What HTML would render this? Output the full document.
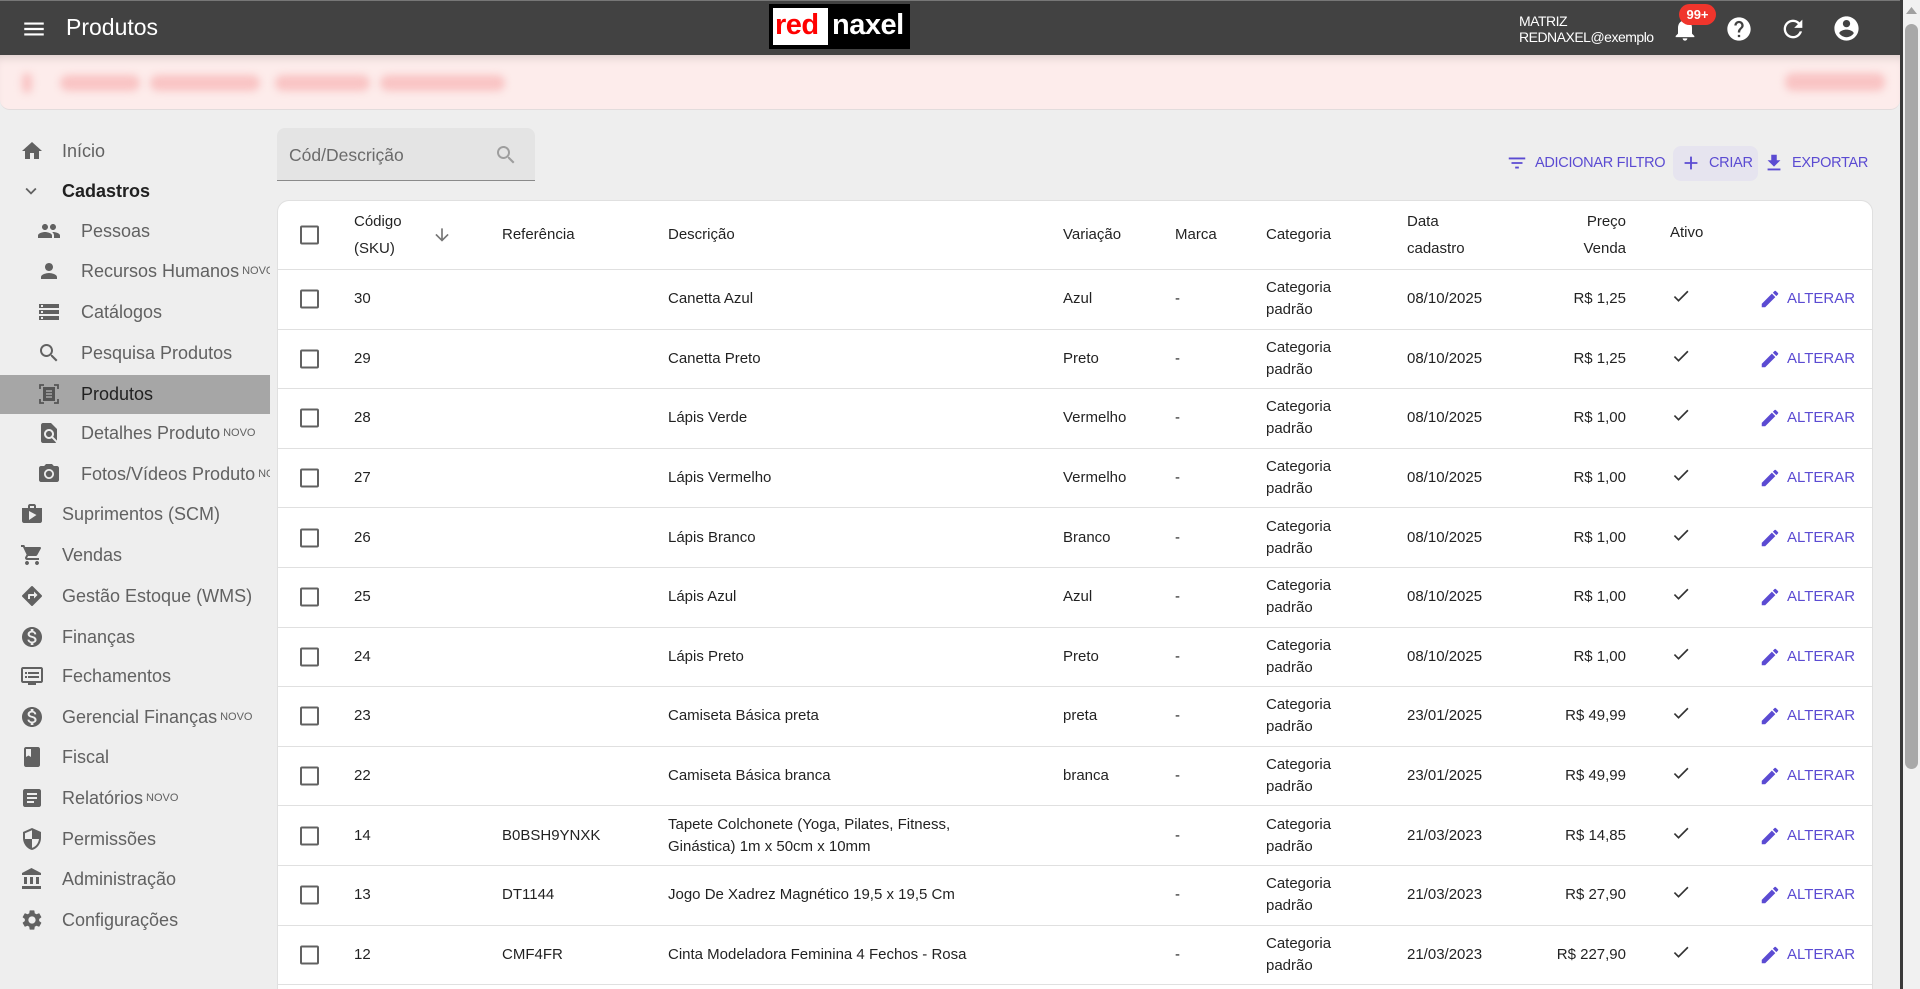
<!DOCTYPE html>
<html><head><meta charset="utf-8">
<style>
*{box-sizing:border-box;margin:0;padding:0}
html,body{width:1920px;height:989px;overflow:hidden}
body{background:#eeeeee;font-family:"Liberation Sans",sans-serif;position:relative;color:rgba(0,0,0,.87)}
#wrap{position:absolute;left:0;top:0;width:1920px;height:989px;overflow:hidden}
.abs{position:absolute}
svg{display:block}
.hdr{left:0;top:0;width:1900px;height:55px;background:#424242;border-top:1px solid #777}
.banner{left:0;top:55px;width:1900px;height:55px;background:#fdeceb;border-radius:0 0 10px 10px;border-bottom:1px solid #e2dcdc;box-shadow:inset 0 8px 10px -6px rgba(0,0,0,.15)}
.blur{position:absolute;background:#f9c4c4;filter:blur(4px);border-radius:8px}
.nav{font-size:18px;color:#616161;white-space:nowrap}
.nav .it{position:absolute;height:40px;display:flex;align-items:center}
.nav sup{font-size:11px;vertical-align:6px;margin-left:3px}
.sel{left:0;top:375px;width:270px;height:39px;background:#a6a6a6}
.card{left:277px;top:200px;width:1596px;height:789px;background:#fff;border-radius:12px 12px 0 0;border:1px solid #e0e0e0;border-bottom:none;overflow:hidden}
.row{position:absolute;left:0;width:1594px;border-bottom:1px solid #e0e0e0;font-size:15px}
.c{position:absolute;top:50%;transform:translateY(-50%);line-height:22px}
.cb{width:19px;height:19px;border:2px solid #616161;border-radius:2px;left:22px}
.alt{color:#5b4bd2;display:flex;align-items:center;gap:6px;font-size:15px}
.btn{color:#5b4bd2;font-size:14.5px;display:flex;align-items:center;gap:7px;position:absolute;letter-spacing:-0.3px;white-space:nowrap}
.sb{left:1900px;top:0;width:20px;height:989px;background:#f1f1f1;border-left:3px solid #3a3a3a}
</style></head><body><div id="wrap">

<div class="abs hdr"></div>
<svg class="abs" style="left:21px;top:16px" width="26" height="26" viewBox="0 0 24 24"><path fill="#fff" d="M3 18h18v-2H3v2zm0-5h18v-2H3v2zm0-7v2h18V6H3z"/></svg>
<div class="abs" style="left:66px;top:14px;color:#fff;font-size:23px">Produtos</div>
<div class="abs" style="left:769px;top:4px;width:141px;height:45px;background:#000;border:2px solid #000">
 <div class="abs" style="left:2px;top:2px;width:55px;height:37px;background:#fff"></div>
 <div class="abs" style="left:4px;top:3px;font-size:29px;font-weight:bold;color:#f00;letter-spacing:-0.5px">red</div>
 <div class="abs" style="left:61px;top:3px;font-size:29px;font-weight:bold;color:#fff;letter-spacing:-0.5px">naxel</div>
</div>
<div class="abs" style="left:1519px;top:13px;color:#fff;font-size:14px;line-height:16px;letter-spacing:-0.5px">MATRIZ<br>REDNAXEL@exemplo</div>
<svg class="abs" style="left:1671px;top:15px" width="28" height="28" viewBox="0 0 24 24"><path fill="#fff" d="M12 22c1.1 0 2-.9 2-2h-4c0 1.1.89 2 2 2zm6-6v-5c0-3.07-1.64-5.64-4.5-6.32V4c0-.83-.67-1.5-1.5-1.5s-1.5.67-1.5 1.5v.68C7.63 5.36 6 7.92 6 11v5l-2 2v1h16v-1l-2-2z"/></svg>
<div class="abs" style="left:1679px;top:4px;width:37px;height:21px;background:#f0352c;border-radius:11px;color:#fff;font-size:13px;font-weight:bold;text-align:center;line-height:21px">99+</div>
<svg class="abs" style="left:1725px;top:15px" width="28" height="28" viewBox="0 0 24 24"><path fill="#fff" d="M12 2C6.48 2 2 6.48 2 12s4.48 10 10 10 10-4.48 10-10S17.52 2 12 2zm1 17h-2v-2h2v2zm2.07-7.75l-.9.92C13.45 12.9 13 13.5 13 15h-2v-.5c0-1.1.45-2.1 1.17-2.83l1.24-1.26c.37-.36.59-.86.59-1.41 0-1.1-.9-2-2-2s-2 .9-2 2H8c0-2.21 1.79-4 4-4s4 1.79 4 4c0 .88-.36 1.68-.93 2.25z"/></svg>
<svg class="abs" style="left:1779px;top:15px" width="28" height="28" viewBox="0 0 24 24"><path fill="#fff" d="M17.65 6.35C16.2 4.9 14.21 4 12 4c-4.42 0-7.99 3.58-7.99 8s3.57 8 7.99 8c3.73 0 6.84-2.55 7.73-6h-2.08c-.82 2.33-3.04 4-5.65 4-3.31 0-6-2.69-6-6s2.69-6 6-6c1.66 0 3.14.69 4.22 1.78L13 11h7V4l-2.35 2.35z"/></svg>
<svg class="abs" style="left:1832px;top:14px" width="29" height="29" viewBox="0 0 24 24"><path fill="#fff" d="M12 2C6.48 2 2 6.48 2 12s4.48 10 10 10 10-4.48 10-10S17.52 2 12 2zm0 3c1.66 0 3 1.34 3 3s-1.34 3-3 3-3-1.34-3-3 1.34-3 3-3zm0 14.2c-2.5 0-4.71-1.28-6-3.22.03-1.99 4-3.08 6-3.08 1.99 0 5.97 1.09 6 3.08-1.29 1.94-3.5 3.22-6 3.22z"/></svg>

<div class="abs banner">
 <div class="blur" style="left:22px;top:18px;width:10px;height:20px"></div>
 <div class="blur" style="left:60px;top:20px;width:80px;height:16px"></div>
 <div class="blur" style="left:150px;top:20px;width:110px;height:16px"></div>
 <div class="blur" style="left:275px;top:20px;width:95px;height:16px"></div>
 <div class="blur" style="left:380px;top:20px;width:125px;height:16px"></div>
 <div class="blur" style="left:1785px;top:18px;width:100px;height:18px"></div>
</div>

<div class="abs sel"></div>
<div class="nav">
<div class="it" style="left:20px;top:131px"><svg width="24" height="24" viewBox="0 0 24 24"><path fill="#616161" d="M10 20v-6h4v6h5v-8h3L12 3 2 12h3v8z"/></svg></div>
<div class="it" style="left:62px;top:131px">Início</div>
<div class="it" style="left:20px;top:171px"><svg width="22" height="22" viewBox="0 0 24 24"><path fill="#616161" d="M16.59 8.59L12 13.17 7.41 8.59 6 10l6 6 6-6z"/></svg></div>
<div class="it" style="left:62px;top:171px;color:#212121;font-weight:bold">Cadastros</div>

<div class="it" style="left:37px;top:211px"><svg width="24" height="24" viewBox="0 0 24 24"><path fill="#616161" d="M16 11c1.66 0 2.99-1.34 2.99-3S17.66 5 16 5c-1.66 0-3 1.34-3 3s1.34 3 3 3zm-8 0c1.66 0 2.99-1.34 2.99-3S9.66 5 8 5C6.34 5 5 6.34 5 8s1.34 3 3 3zm0 2c-2.33 0-7 1.17-7 3.5V19h14v-2.5c0-2.33-4.67-3.5-7-3.5zm8 0c-.29 0-.62.02-.97.05 1.16.84 1.97 1.97 1.97 3.45V19h6v-2.5c0-2.33-4.67-3.5-7-3.5z"/></svg></div>
<div class="it" style="left:81px;top:211px">Pessoas</div>
<div class="it" style="left:37px;top:251px"><svg width="24" height="24" viewBox="0 0 24 24"><path fill="#616161" d="M12 12c2.21 0 4-1.79 4-4s-1.79-4-4-4-4 1.79-4 4 1.79 4 4 4zm0 2c-2.67 0-8 1.34-8 4v2h16v-2c0-2.66-5.33-4-8-4z"/></svg></div>
<div class="it" style="left:81px;top:251px;width:189px;overflow:hidden">Recursos Humanos<sup>NOVO</sup></div>
<div class="it" style="left:37px;top:292px"><svg width="24" height="24" viewBox="0 0 24 24"><path fill="#616161" d="M2 20h20v-4H2v4zm2-3h2v2H4v-2zM2 4v4h20V4H2zm4 3H4V5h2v2zm-4 7h20v-4H2v4zm2-3h2v2H4v-2z"/></svg></div>
<div class="it" style="left:81px;top:292px">Catálogos</div>
<div class="it" style="left:37px;top:333px"><svg width="24" height="24" viewBox="0 0 24 24"><path fill="#616161" d="M15.5 14h-.79l-.28-.27C15.41 12.59 16 11.11 16 9.5 16 5.91 13.09 3 9.5 3S3 5.91 3 9.5 5.91 16 9.5 16c1.61 0 3.09-.59 4.23-1.57l.27.28v.79l5 4.99L20.49 19l-4.99-5zm-6 0C7.01 14 5 11.99 5 9.5S7.01 5 9.5 5 14 7.01 14 9.5 11.99 14 9.5 14z"/></svg></div>
<div class="it" style="left:81px;top:333px">Pesquisa Produtos</div>
<div class="it" style="left:37px;top:374px"><svg width="24" height="24" viewBox="0 0 24 24"><path fill="none" stroke="#555" stroke-width="1.8" d="M3 7V3h4M17 3h4v4M21 17v4h-4M7 21H3v-4"/><rect x="6" y="5" width="12" height="14" fill="#555"/><path stroke="#a6a6a6" stroke-width="1.4" d="M9 9h6M9 12h6M9 15h6"/></svg></div>
<div class="it" style="left:81px;top:374px;color:#212121">Produtos</div>
<div class="it" style="left:37px;top:413px"><svg width="24" height="24" viewBox="0 0 24 24"><path fill="#616161" d="M20 19.59V8l-6-6H6c-1.1 0-1.99.9-1.99 2L4 20c0 1.1.89 2 1.99 2H18c.45 0 .85-.15 1.19-.4l-4.43-4.43c-.8.52-1.74.83-2.76.83-2.76 0-5-2.24-5-5s2.24-5 5-5 5 2.24 5 5c0 1.02-.31 1.96-.83 2.75L20 19.59zM9 13c0 1.66 1.34 3 3 3s3-1.34 3-3-1.34-3-3-3-3 1.34-3 3z"/></svg></div>
<div class="it" style="left:81px;top:413px">Detalhes Produto<sup>NOVO</sup></div>
<div class="it" style="left:37px;top:454px"><svg width="24" height="24" viewBox="0 0 24 24"><circle cx="12" cy="12" r="3.2" fill="#616161"/><path fill="#616161" d="M9 2L7.17 4H4c-1.1 0-2 .9-2 2v12c0 1.1.9 2 2 2h16c1.1 0 2-.9 2-2V6c0-1.1-.9-2-2-2h-3.17L15 2H9zm3 15c-2.76 0-5-2.24-5-5s2.24-5 5-5 5 2.24 5 5-2.24 5-5 5z"/></svg></div>
<div class="it" style="left:81px;top:454px;width:189px;overflow:hidden">Fotos/Vídeos Produto<sup>NOVO</sup></div>

<div class="it" style="left:20px;top:494px"><svg width="24" height="24" viewBox="0 0 24 24"><path fill="#616161" d="M16 6V4c0-1.11-.89-2-2-2h-4c-1.11 0-2 .89-2 2v2H2v13c0 1.11.89 2 2 2h16c1.11 0 2-.89 2-2V6h-6zm-6-2h4v2h-4V4zM9 18V9l7.5 4L9 18z"/></svg></div>
<div class="it" style="left:62px;top:494px">Suprimentos (SCM)</div>
<div class="it" style="left:20px;top:535px"><svg width="24" height="24" viewBox="0 0 24 24"><path fill="#616161" d="M7 18c-1.1 0-1.99.9-1.99 2S5.9 22 7 22s2-.9 2-2-.9-2-2-2zM1 2v2h2l3.6 7.59-1.35 2.45c-.16.28-.25.61-.25.96 0 1.1.9 2 2 2h12v-2H7.42c-.14 0-.25-.11-.25-.25l.03-.12.9-1.63h7.45c.75 0 1.41-.41 1.75-1.03l3.58-6.49c.08-.14.12-.31.12-.48 0-.55-.45-1-1-1H5.21l-.94-2H1zm16 16c-1.1 0-1.99.9-1.99 2s.89 2 1.99 2 2-.9 2-2-.9-2-2-2z"/></svg></div>
<div class="it" style="left:62px;top:535px">Vendas</div>
<div class="it" style="left:20px;top:576px"><svg width="24" height="24" viewBox="0 0 24 24"><path fill="#616161" d="M21.71 11.29l-9-9c-.39-.39-1.02-.39-1.41 0l-9 9c-.39.39-.39 1.02 0 1.41l9 9c.39.39 1.02.39 1.41 0l9-9c.39-.38.39-1.01 0-1.41zM14 14.5V12h-4v3H8v-4c0-.55.45-1 1-1h5V7.5l3.5 3.5-3.5 3.5z"/></svg></div>
<div class="it" style="left:62px;top:576px">Gestão Estoque (WMS)</div>
<div class="it" style="left:20px;top:617px"><svg width="24" height="24" viewBox="0 0 24 24"><path fill="#616161" d="M12 2C6.48 2 2 6.48 2 12s4.48 10 10 10 10-4.48 10-10S17.52 2 12 2zm1.41 16.09V20h-2.67v-1.93c-1.71-.36-3.16-1.46-3.27-3.4h1.96c.1 1.05.82 1.87 2.65 1.87 1.96 0 2.4-.98 2.4-1.59 0-.83-.44-1.61-2.67-2.14-2.48-.6-4.18-1.62-4.18-3.67 0-1.72 1.39-2.84 3.11-3.21V4h2.67v1.95c1.86.45 2.79 1.86 2.85 3.39H14.3c-.05-1.11-.64-1.87-2.22-1.87-1.5 0-2.4.68-2.4 1.64 0 .84.65 1.39 2.67 1.91s4.18 1.39 4.18 3.91c-.01 1.83-1.38 2.83-3.12 3.16z"/></svg></div>
<div class="it" style="left:62px;top:617px">Finanças</div>
<div class="it" style="left:20px;top:656px"><svg width="24" height="24" viewBox="0 0 24 24"><path fill="#616161" d="M21 3H3c-1.1 0-2 .9-2 2v12c0 1.1.9 2 2 2h5v2h8v-2h5c1.1 0 1.99-.9 1.99-2L23 5c0-1.1-.9-2-2-2zm0 14H3V5h18v12zm-2-9H8v2h11V8zm0 4H8v2h11v-2zM7 8H5v2h2V8zm0 4H5v2h2v-2z"/></svg></div>
<div class="it" style="left:62px;top:656px">Fechamentos</div>
<div class="it" style="left:20px;top:697px"><svg width="24" height="24" viewBox="0 0 24 24"><path fill="#616161" d="M12 2C6.48 2 2 6.48 2 12s4.48 10 10 10 10-4.48 10-10S17.52 2 12 2zm1.41 16.09V20h-2.67v-1.93c-1.71-.36-3.16-1.46-3.27-3.4h1.96c.1 1.05.82 1.87 2.65 1.87 1.96 0 2.4-.98 2.4-1.59 0-.83-.44-1.61-2.67-2.14-2.48-.6-4.18-1.62-4.18-3.67 0-1.72 1.39-2.84 3.11-3.21V4h2.67v1.95c1.86.45 2.79 1.86 2.85 3.39H14.3c-.05-1.11-.64-1.87-2.22-1.87-1.5 0-2.4.68-2.4 1.64 0 .84.65 1.39 2.67 1.91s4.18 1.39 4.18 3.91c-.01 1.83-1.38 2.83-3.12 3.16z"/></svg></div>
<div class="it" style="left:62px;top:697px">Gerencial Finanças<sup>NOVO</sup></div>
<div class="it" style="left:20px;top:737px"><svg width="24" height="24" viewBox="0 0 24 24"><path fill="#616161" d="M18 2H6c-1.1 0-2 .9-2 2v16c0 1.1.9 2 2 2h12c1.1 0 2-.9 2-2V4c0-1.1-.9-2-2-2zM6 4h5v8l-2.5-1.5L6 12V4z"/></svg></div>
<div class="it" style="left:62px;top:737px">Fiscal</div>
<div class="it" style="left:20px;top:778px"><svg width="24" height="24" viewBox="0 0 24 24"><path fill="#616161" d="M19 3H5c-1.1 0-2 .9-2 2v14c0 1.1.9 2 2 2h14c1.1 0 2-.9 2-2V5c0-1.1-.9-2-2-2zm-5 14H7v-2h7v2zm3-4H7v-2h10v2zm0-4H7V7h10v2z"/></svg></div>
<div class="it" style="left:62px;top:778px">Relatórios<sup>NOVO</sup></div>
<div class="it" style="left:20px;top:819px"><svg width="24" height="24" viewBox="0 0 24 24"><path fill="#616161" d="M12 1L3 5v6c0 5.55 3.84 10.74 9 12 5.16-1.26 9-6.45 9-12V5l-9-4zm0 10.99h7c-.53 4.12-3.28 7.79-7 8.94V12H5V6.3l7-3.11v8.8z"/></svg></div>
<div class="it" style="left:62px;top:819px">Permissões</div>
<div class="it" style="left:20px;top:859px"><svg width="24" height="24" viewBox="0 0 24 24"><path fill="#616161" d="M4 10v7h3v-7H4zm6 0v7h3v-7h-3zM2 22h19v-3H2v3zm14-12v7h3v-7h-3zm-4.5-9L2 6v2h19V6l-9.5-5z"/></svg></div>
<div class="it" style="left:62px;top:859px">Administração</div>
<div class="it" style="left:20px;top:900px"><svg width="24" height="24" viewBox="0 0 24 24"><path fill="#616161" d="M19.14 12.94c.04-.3.06-.61.06-.94 0-.32-.02-.64-.07-.94l2.03-1.58c.18-.14.23-.41.12-.61l-1.92-3.32c-.12-.22-.37-.29-.59-.22l-2.39.96c-.5-.38-1.03-.7-1.62-.94l-.36-2.54c-.04-.24-.24-.41-.48-.41h-3.84c-.24 0-.43.17-.47.41l-.36 2.54c-.59.24-1.13.57-1.62.94l-2.39-.96c-.22-.08-.47 0-.59.22L2.74 8.87c-.12.21-.08.47.12.61l2.03 1.58c-.05.3-.09.63-.09.94s.02.64.07.94l-2.03 1.58c-.18.14-.23.41-.12.61l1.92 3.32c.12.22.37.29.59.22l2.39-.96c.5.38 1.03.7 1.62.94l.36 2.54c.05.24.24.41.48.41h3.84c.24 0 .44-.17.47-.41l.36-2.54c.59-.24 1.13-.56 1.62-.94l2.39.96c.22.08.47 0 .59-.22l1.92-3.32c.12-.22.07-.47-.12-.61l-2.01-1.58zM12 15.6c-1.98 0-3.6-1.62-3.6-3.6s1.62-3.6 3.6-3.6 3.6 1.62 3.6 3.6-1.62 3.6-3.6 3.6z"/></svg></div>
<div class="it" style="left:62px;top:900px">Configurações</div>
</div>

<div class="abs" style="left:277px;top:128px;width:258px;height:53px;background:#e4e4e4;border-radius:8px 8px 0 0;border-bottom:1px solid #8a8a8a"></div>
<div class="abs" style="left:289px;top:145px;font-size:17.5px;color:#6b6b6b">Cód/Descrição</div>
<svg class="abs" style="left:494px;top:143px" width="24" height="24" viewBox="0 0 24 24"><path fill="#9e9e9e" d="M15.5 14h-.79l-.28-.27C15.41 12.59 16 11.11 16 9.5 16 5.91 13.09 3 9.5 3S3 5.91 3 9.5 5.91 16 9.5 16c1.61 0 3.09-.59 4.23-1.57l.27.28v.79l5 4.99L20.49 19l-4.99-5zm-6 0C7.01 14 5 11.99 5 9.5S7.01 5 9.5 5 14 7.01 14 9.5 11.99 14 9.5 14z"/></svg>

<div class="btn" style="left:1506px;top:152px"><svg width="22" height="22" viewBox="0 0 24 24"><path fill="#5b4bd2" d="M10 18h4v-2h-4v2zM3 6v2h18V6H3zm3 7h12v-2H6v2z"/></svg>ADICIONAR FILTRO</div>
<div class="abs" style="left:1673px;top:146px;width:85px;height:35px;background:#e6e4ef;border-radius:8px"></div>
<div class="btn" style="left:1680px;top:152px"><svg width="22" height="22" viewBox="0 0 24 24"><path fill="#5b4bd2" d="M19 13h-6v6h-2v-6H5v-2h6V5h2v6h6v2z"/></svg>CRIAR</div>
<div class="btn" style="left:1763px;top:152px"><svg width="22" height="22" viewBox="0 0 24 24"><path fill="#5b4bd2" d="M19 9h-4V3H9v6H5l7 7 7-7zM5 18v2h14v-2H5z"/></svg>EXPORTAR</div>

<div class="abs card">
 <div class="row" style="top:0;height:69px">
  <div class="c cb"></div>
  <div class="c" style="left:76px;line-height:27px">Código<br>(SKU)</div>
  <svg class="c" style="left:154px" width="20" height="20" viewBox="0 0 24 24"><path fill="#757575" d="M20 12l-1.41-1.41L13 16.17V4h-2v12.17l-5.58-5.59L4 12l8 8 8-8z"/></svg>
  <div class="c" style="left:224px">Referência</div>
  <div class="c" style="left:390px">Descrição</div>
  <div class="c" style="left:785px">Variação</div>
  <div class="c" style="left:897px">Marca</div>
  <div class="c" style="left:988px">Categoria</div>
  <div class="c" style="left:1129px;line-height:27px">Data<br>cadastro</div>
  <div class="c" style="right:246px;text-align:right;line-height:27px">Preço<br>Venda</div>
  <div class="c" style="left:1392px;margin-top:-2px">Ativo</div>
 </div>
</div>
<div class="abs sb"><div class="abs" style="left:2px;top:24px;width:13px;height:745px;background:#a8a8a8;border-radius:7px"></div>
<svg class="abs" style="left:2px;top:6px" width="13" height="9" viewBox="0 0 13 9"><path fill="#a0a0a0" d="M6.5 1L12 8H1z"/></svg></div>
</div>
<script>
var data=[["30","","Canetta Azul","Azul","08/10/2025","R$ 1,25"],["29","","Canetta Preto","Preto","08/10/2025","R$ 1,25"],["28","","Lápis Verde","Vermelho","08/10/2025","R$ 1,00"],["27","","Lápis Vermelho","Vermelho","08/10/2025","R$ 1,00"],["26","","Lápis Branco","Branco","08/10/2025","R$ 1,00"],["25","","Lápis Azul","Azul","08/10/2025","R$ 1,00"],["24","","Lápis Preto","Preto","08/10/2025","R$ 1,00"],["23","","Camiseta Básica preta","preta","23/01/2025","R$ 49,99"],["22","","Camiseta Básica branca","branca","23/01/2025","R$ 49,99"],["14","B0BSH9YNXK","Tapete Colchonete (Yoga, Pilates, Fitness,<br>Ginástica) 1m x 50cm x 10mm","","21/03/2023","R$ 14,85"],["13","DT1144","Jogo De Xadrez Magnético 19,5 x 19,5 Cm","","21/03/2023","R$ 27,90"],["12","CMF4FR","Cinta Modeladora Feminina 4 Fechos - Rosa","","21/03/2023","R$ 227,90"],["11","","","","",""]];
var card=document.querySelector('.card'),h='';
data.forEach(function(d,i){
 var t=69+i*59.6;
 h+='<div class="row" style="top:'+t+'px;height:59.6px">';
 if(d[0]=="11"){h+='</div>';return;}
 h+='<div class="c cb"></div><div class="c" style="left:76px">'+d[0]+'</div><div class="c" style="left:224px">'+d[1]+'</div><div class="c" style="left:390px">'+d[2]+'</div><div class="c" style="left:785px">'+d[3]+'</div><div class="c" style="left:897px">-</div><div class="c" style="left:988px">Categoria<br>padrão</div><div class="c" style="left:1129px">'+d[4]+'</div><div class="c" style="right:246px">'+d[5]+'</div>';
 h+='<svg class="c" style="left:1393px;margin-top:-3px" width="20" height="20" viewBox="0 0 24 24"><path fill="#333" d="M9 16.17L4.83 12l-1.42 1.42L9 19 21 7l-1.41-1.41z"/></svg>';
 h+='<div class="c alt" style="left:1481px"><svg width="22" height="22" viewBox="0 0 24 24"><path fill="#5b4bd2" d="M3 17.25V21h3.75L17.81 9.94l-3.75-3.75L3 17.25zM20.71 7.04c.39-.39.39-1.02 0-1.41l-2.34-2.34c-.39-.39-1.02-.39-1.41 0l-1.83 1.83 3.75 3.75 1.83-1.83z"/></svg>ALTERAR</div>';
 h+='</div>';
});
card.insertAdjacentHTML('beforeend',h);
</script>
</body></html>
